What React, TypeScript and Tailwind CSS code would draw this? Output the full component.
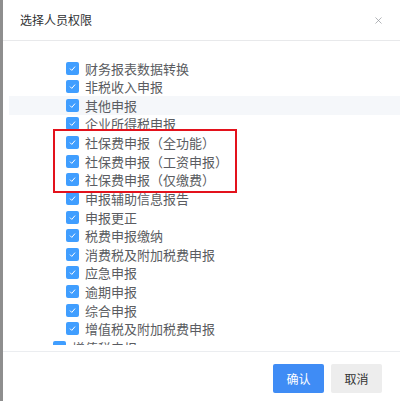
import { X } from "lucide-react";

const items = [
  "财务报表数据转换",
  "非税收入申报",
  "其他申报",
  "企业所得税申报",
  "社保费申报（全功能）",
  "社保费申报（工资申报）",
  "社保费申报（仅缴费）",
  "申报辅助信息报告",
  "申报更正",
  "税费申报缴纳",
  "消费税及附加税费申报",
  "应急申报",
  "逾期申报",
  "综合申报",
  "增值税及附加税费申报",
];

const Check = () => (
  <span className="flex h-[13px] w-[13px] shrink-0 items-center justify-center rounded-[2px] bg-[#409eff]">
    <svg width="9" height="9" viewBox="0 0 9 9" fill="none">
      <polyline points="2,4.6 3.8,6.4 7,2.6" stroke="#ffffff" strokeWidth="1" />
    </svg>
  </span>
);

const Row = ({ label, hover, level = 2 }: { label: string; hover?: boolean; level?: number }) => (
  <div
    className={`flex h-[18.64px] items-center gap-[6px] ${level === 2 ? "pl-[57px]" : "pl-[44px]"} ${
      hover ? "bg-[#f5f7fa]" : ""
    }`}
  >
    <Check />
    <span className="whitespace-nowrap text-[13px] leading-none text-[#5a5c61]">{label}</span>
  </div>
);

export default function App() {
  return (
    <div className="flex h-[401px] w-[400px] bg-white font-['Noto_Sans_CJK_SC',sans-serif]">
      <div className="w-[3px] bg-[#8e8e8e]" />
      <div className="flex flex-1 flex-col">
        <div className="flex h-[40px] items-center justify-between pl-[17px] pr-[16px]">
          <span className="text-[12px] text-[#303133]">选择人员权限</span>
          <X size={11} strokeWidth={1.5} className="text-[#909399]" />
        </div>
        <div className="h-px bg-[#e8e9eb]" />
        <div className="relative h-[304px] overflow-hidden pl-[6px] pt-[17.7px]">
          {items.map((t) => (
            <Row key={t} label={t} hover={t === "其他申报"} />
          ))}
          {/* next parent node, scrolled mostly out of view */}
          <Row label="增值税申报" level={1} />
          <div className="absolute left-[50px] top-[88px] h-[64px] w-[184px] border-2 border-[#e3121c]" />
        </div>
        <div className="h-[6px]" />
        <div className="h-px bg-[#ebedf0]" />
        <div className="flex flex-1 items-start justify-end gap-[7px] pr-[18px] pt-[12px]">
          <button className="h-[29px] w-[51px] rounded-[2px] bg-[#3f8cf5] text-[12px] text-white">确认</button>
          <button className="h-[29px] w-[51px] rounded-[2px] bg-[#ededed] text-[12px] text-[#333333]">取消</button>
        </div>
      </div>
    </div>
  );
}
